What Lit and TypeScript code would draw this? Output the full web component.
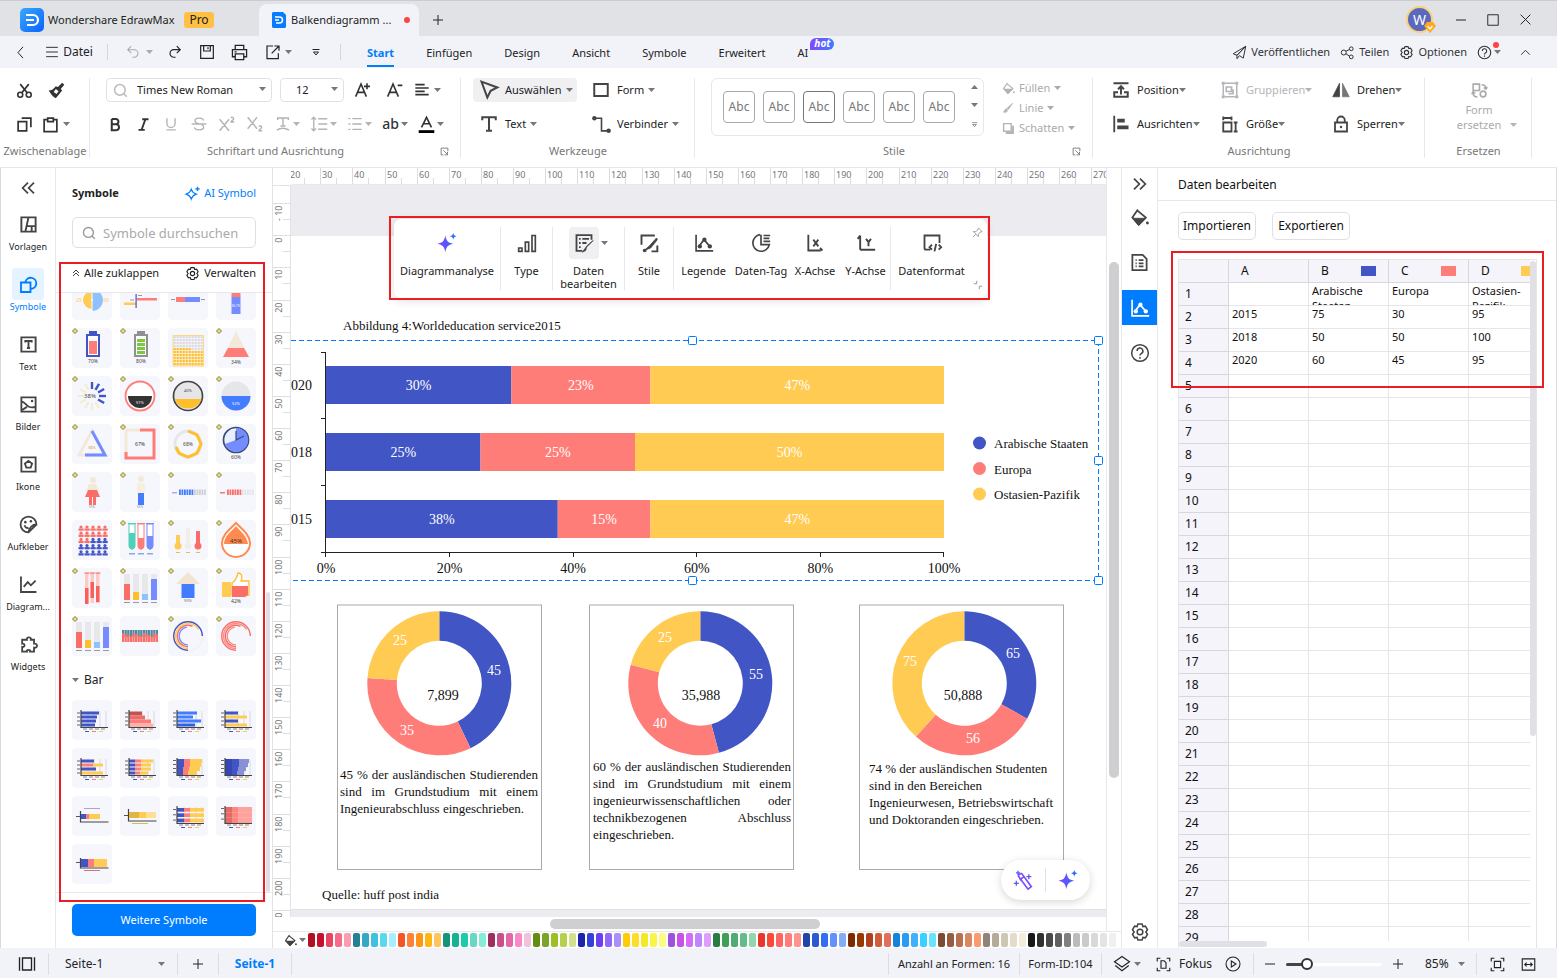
import { LitElement, html, svg, css } from "lit";
import { customElement } from "lit/decorators.js";

const BLUE = "#4155c5";
const CORAL = "#ff7d78";
const GOLD = "#ffcb52";

/* ---------- small drawing helpers ---------- */
const R = (x: number, y: number, w: number, h: number, f: string) =>
  svg`<rect x=${x} y=${y} width=${w} height=${h} fill=${f} />`;
const P = (d: string, stroke = "none", w = 1, fill = "none") =>
  svg`<path d=${d} stroke=${stroke} stroke-width=${w} fill=${fill} />`;
const C = (x: number, y: number, r: number, fill = "none", stroke = "none", w = 1) =>
  svg`<circle cx=${x} cy=${y} r=${r} fill=${fill} stroke=${stroke} stroke-width=${w} />`;
const T = (x: number, y: number, t: string, f = "#444", s = 5) =>
  svg`<text x=${x} y=${y} fill=${f} font-size=${s} text-anchor="middle">${t}</text>`;

const arc = (cx: number, cy: number, ro: number, ri: number, a0: number, a1: number) => {
  const p = (r: number, a: number) =>
    `${(cx + r * Math.sin(a * 2 * Math.PI)).toFixed(2)} ${(cy - r * Math.cos(a * 2 * Math.PI)).toFixed(2)}`;
  const big = a1 - a0 > 0.5 ? 1 : 0;
  return `M${p(ro, a0)}A${ro} ${ro} 0 ${big} 1 ${p(ro, a1)}L${p(ri, a1)}A${ri} ${ri} 0 ${big} 0 ${p(ri, a0)}Z`;
};

/* ---------- icon set, 24 unit grid ---------- */
const k = "currentColor";
const ICONS: Record<string, unknown> = {
  back: P("M16 3 8 12l8 9", k, 1.6),
  menu: P("M2 4h20M2 12h20M2 20h20", k, 1.6),
  undo: P("M9 2 3 8l6 6M3 8h11a6.500 6.500 0 0 1 0 13h-3", k, 1.8),
  redo: P("m15 2 6 6-6 6M21 8H10a6.500 6.500 0 0 0 0 13h3", k, 2),
  save: P("M2.500 2.500h19v19h-19zM7 2.500v8h10v-8M13.500 5v3", k, 1.8),
  print: P("M6 8V2h12v6M6 18H2V8h20v10h-4M6 14h12v8H6zM5 11h3", k, 1.8),
  share: P("M12 3H3v19h17v-8M14 3h7v7M21 3 10 14", k, 1.8),
  more: P("M5 7h14M7 12h10l-5 6z", k, 2),
  plus: P("M12 2v20M2 12h20", k, 2),
  minus: P("M2 12h20", k, 2),
  square: P("M3 3h18v18H3z", k, 1.6),
  cross: P("m3 3 18 18M21 3 3 21", k, 1.8),
  chevUp: P("m4 16 8-8 8 8", k, 1.8),
  send: P("M22 2 2 14l6 2.500L22 2l-4 19-6-4M22 2 8 16.500V22l4-5", k, 1.6),
  nodes: svg`${C(6, 12, 4, "none", k, 1.6)}${C(18, 6, 3, "none", k, 1.6)}${C(18, 19, 3, "none", k, 1.6)}${P("m9.500 10 6-3M9.500 14l6 4", k, 1.6)}`,
  gear: svg`${P("M9.500 2.500h5l1 3 3-.5 2.500 4.300L19 12l2 2.700-2.500 4.300-3-.5-1 3h-5l-1-3-3 .5L3 14.700 5 12 3 9.300 5.500 5l3 .5z", k, 1.8)}${C(12, 12, 3.400, "none", k, 1.8)}`,
  help: svg`${C(12, 12, 10, "none", k, 1.8)}${P("M8.500 9.500a3.500 3.500 0 1 1 5 3.200c-1.200.6-1.500 1.200-1.500 2.300M12 16.800v2", k, 1.8)}`,
  cut: svg`${C(6, 18, 3.500, "none", k, 2.200)}${C(18, 18, 3.500, "none", k, 2.200)}${P("M8 15.500 18 3M16 15.500 6 3", k, 2.400)}`,
  brush: svg`${P("m20 1 3 3-5 6 2 2-9 11C7 21 4 17 1 12c4 0 7-2 10-6l3 1z", "none", 0, k)}${P("m8 14 4 3 3-4-4-3z", "none", 0, "#fff")}`,
  copy: P("M3 8h12v13H3zM8 3h13v13", k, 2.400),
  paste: P("M8 5H3v17h18V5h-5M8 3h8v5H8z", k, 2.400),
  glass: svg`${C(11, 11, 8.500, "none", k, 2.400)}${P("m17 17 5 5", k, 2.400)}`,
  aplus: P("M1 22 9 3l8 19M4.500 15.500h9M18 2v9M13.500 6.500h9", k, 2.400),
  aminus: P("M1 22 9 3l8 19M4.500 15.500h9M16 5h7", k, 2.400),
  align: P("M2 4h14M2 9h20M2 14h14M2 19h20", k, 2.600),
  bold: P("M6 3v18h7.500a4.800 4.800 0 0 0 0-9.500H6M6 3h6.500a4.200 4.200 0 0 1 0 8.500", k, 3.200),
  italic: P("M10 3.500h10M4 20.500h10M15 3.500 9 20.500", k, 3),
  under: P("M5 2v9a7 7 0 0 0 14 0V2M4 22h16", k, 2.400),
  strike: P("M19 7c-1-5-13-5-13 0 0 3 3 4 6 5M5 17c1 5 14 5 14 0 0-2-1-3-3-4M1 12h22", k, 2),
  sup: P("m1 5 14 17M15 5 1 22M18 3c1-2 4-1 4 1 0 2-4 3-4 5h5", k, 2.200),
  sub: P("m1 2 14 17M15 2 1 19M18 16c1-2 4-1 4 1 0 2-4 3-4 5h5", k, 2.200),
  tcase: P("M4 6V3h16v3M12 3v12M8 15h8M3 21c5-3 12-3 18 0", k, 2.200),
  spacing: P("M5 3v18M2 6l3-3 3 3M2 18l3 3 3-3M11 5h12M11 12h12M11 19h12", k, 1.800),
  list: P("M2 4h3M2 12h3M2 20h3M8 4h14M8 12h14M8 20h14", k, 2),
  fontcol: svg`${P("M5 16 12 2l7 14M8 11h8", k, 2.300)}${R(1, 20, 22, 4, "#000")}`,
  launch: P("M9 21H3V3h18v8M9 9l11 11M20 13v8h-8", k, 2.400),
  pointer: P("M3 2 22 9l-8 4-4 8z", k, 2.400),
  rect: P("M3 4h18v16H3z", k, 2.600),
  text: P("M3 7V3h18v4M12 3v18M8 21h8", k, 2.700),
  conn: svg`${P("M5 4h7v16h7", k, 2)}${C(3, 4, 2.800, k)}${C(21, 20, 2.800, k)}`,
  bucket: svg`${P("M10 2 3 12l8 9 9-9L9 3", k, 2.200)}${P("M3 13h17l-9 9z", k, 1, k)}${C(22, 19, 1.800, k)}`,
  pen: P("M22 2 10 12l3 3zM9 13c-4 0-2 5-7 7 5 2 10 0 9-5z", k, 1, k),
  shadow: svg`${P("M7 22h15V7h-4v11H7z", k, 0, k)}${P("M3 3h14v14H3z", k, 2.600)}`,
  position: P("M2 3h20M12 18V7M8 11l4-4 4 4M8 15H3v6h18v-6h-5", k, 2.600),
  ausrichten: svg`${P("M3 1v22", k, 2.400)}${R(7, 5, 10, 5, k)}${R(7, 14, 15, 5, k)}`,
  group: svg`${P("M5 3h14M5 21h14M3 5v14M21 5v14", k, 2)}${R(1, 1, 4, 4, k)}${R(19, 1, 4, 4, k)}${R(1, 19, 4, 4, k)}${R(19, 19, 4, 4, k)}${P("M7 8h7v6H7zM16 11v6h-6", k, 2.200)}`,
  size: P("M3 10h11v12H3zM3 2v5M3 4h11M14 2v5M17 10h5M17 22h5M19.500 10v12", k, 2.400),
  flip: svg`${P("M10 3v18H1z", k, 1, k)}${P("M14 3v18h9z", "#777", 1, "#777")}`,
  lock: svg`${P("M4 10h16v12H4zM7 10V7a5 5 0 0 1 10 0v3", k, 2.400)}${C(12, 16, 1.600, k)}`,
  replace: svg`${P("M3 3h9v9H3zM15 4c4 0 6 2 6 6M18 8l3 2 2-3M3 15c0 4 2 6 6 6M1 17l2-3 3 2", k, 2.200)}${C(17, 17, 4, "none", k, 2.400)}`,
  dblLeft: P("m12 4-8 8 8 8M21 4l-8 8 8 8", k, 2.600),
  dblRight: P("m3 4 8 8-8 8M12 4l8 8-8 8", k, 2.600),
  vorlagen: P("M3 3h18v18H3zM8 21 12 3M10 14h11M16 14v7", k, 2.400),
  shapes: svg`${P("M2.500 9.500h12v12h-12z", k, 2.300)}${P("M8 9a7 7 0 1 1 7 8.500", k, 2.300)}`,
  tbox: P("M3 3h18v18H3zM8 9.500V7.500h8v2M12 8v8M10 16.500h4", k, 2.400),
  image: svg`${P("M3 3h18v18H3zM3 8c8 2 6 10 18 7M4 19l6-4", k, 2.300)}${C(16.500, 7.500, 1.600, k)}`,
  ikone: P("M3 3h18v18H3zM12 7.500l4.500 3.300-1.700 5.200H9.200L7.500 10.800z", k, 2.300),
  sticker: svg`${P("M12 22A10 10 0 1 1 22 12c-5 0-9 4-10 10zM12 22 22 12M7 13c1 3 3 4 5 3", k, 2.300)}${C(8, 9, 1.600, k)}${C(15, 8, 1.600, k)}`,
  chart: P("M2.500 2v19.500H22M6 15l5-6 4 4 6-6", k, 2.300),
  widget: P("M7 6h3c-1-4 6-4 5 0h4v5c5-1 5 6 0 5v5h-5c1-3-5-3-4 0H4v-6c4 1 4-5 0-4V6z", k, 2.300),
  aistar: svg`${P("M10 5c1.500 5 3 6.500 8 8-5 1.500-6.500 3-8 8-1.500-5-3-6.500-8-8 5-1.500 6.500-3 8-8z", k, 1.800)}${P("M20 1v7M16.500 4.500h7", k, 2.200)}`,
  upup: P("m3 12 9-9 9 9M3 21l9-9 9 9", k, 2.600),
  aifill: svg`<defs><linearGradient id="g" x1="0" x2="1"><stop offset="0" stop-color="#8a3ffc"/><stop offset="1" stop-color="#2f6bff"/></linearGradient></defs>${P("M10 3c1.500 7 3 8.500 9.500 10C13 14.500 11.500 16 10 23 8.500 16 7 14.500.5 13 7 11.500 8.500 10 10 3z", "none", 0, "url(#g)")}${P("M19.500 0c.7 2.600 1.200 3.300 4 4-2.800.7-3.300 1.400-4 4-.7-2.600-1.200-3.300-4-4 2.800-.7 3.300-1.400 4-4z", "none", 0, "#2f6bff")}`,
  bars: P("M2 18h4v4H2zM10 11h4v11h-4zM18 3h4v19h-4z", k, 2),
  edit: svg`${P("M21 8V2.500H3v19h7M6 7h2M10 7h8M6 12h2M10 12h5M6 17h2", k, 2.200)}${P("m23 9-8 8-1 4-4 2 3-4 3-4z", k, 1, k)}`,
  style: svg`${P("M9 21H6M3 14V3h16M22 15v7h-7", k, 2.300)}${P("m21 6-9 10-6 5 8-3 8-10z", k, 1, k)}${C(6.500, 21, 2, k)}`,
  legend: svg`${P("M2.500 2v19.500H23M6 16l6-8 7 8", k, 2)}${C(7, 16, 2.600, k)}${C(12.500, 8, 2.600, k)}${C(19, 16, 2.600, k)}`,
  tag: P("M11 2a10 10 0 1 0 11 12H12V2M15 3h8M15 6.500h7M15 10h8", k, 2),
  xaxis: P("M4 2v19h15M18 18l3 3M10 8l6 8M16 8l-6 8", k, 2.200),
  yaxis: P("M5 20V3M2 7l3-4M5 20h18M12 7l3 4 3-4M15 11v5", k, 2.300),
  code: P("M10 20H5a2 2 0 0 1-2-2V3h18v9M12 14l-3 3 3 3M20 14l3 3-3 3M17 13l-2 9", k, 2.200),
  pin: P("m14 2 8 8-4 1-4 5v5L3 10h5l5-4zM8 16l-6 6", k, 2),
  shrink: P("M2 9h7V2M15 22v-7h7", k, 2.400),
  wand: svg`${P("M7 8 18 23l4-3L11 5c-1-2-6 1-4 3zM8 12l5-4", "#7a4dfb", 2)}${P("M4 13v6M1 16h6M6 1v5M3.500 3.500h5M19 5v6M16 8h6", "#5b5bff", 1.600)}`,
  doc: P("M3 2.500h13l5 5v14H3zM7 9h1.500M11 9h6M7 13h1.500M11 13h6M7 17h1.500M11 17h6", k, 2.200),
  pages: P("M2 3v18M22 3v18M6 4h12v16H6z", k, 1.800),
  layers: P("m12 2 10 7-10 7L2 9zM3 14l9 7 9-7", k, 1.600),
  focus: P("M2 7V2h5M17 2h5v5M22 17v5h-5M7 22H2v-5M8 6h5l3 3v9H8z", k, 1.800),
  play: svg`${C(12, 12, 10.500, "none", k, 1.600)}${P("M9.500 7.500v9l7-4.500z", k, 1.600)}`,
  fit: P("M2 7V2h5M17 2h5v5M22 17v5h-5M7 22H2v-5M7 7h10v10H7z", k, 1.800),
  width: P("M2 3h20v18H2zM6 12h12M9 9l-3 3 3 3M15 9l3 3-3 3", k, 1.800),
};
const ic = (name: string, size = 18) =>
  html`<svg class="ic" width=${size} height=${size} viewBox="0 0 24 24" aria-hidden="true">${ICONS[name]}</svg>`;
const caret = html`<svg class="caret" width="7" height="4" viewBox="0 0 7 4" aria-hidden="true"><path d="M0 0h7L3.500 4z" fill="currentColor" /></svg>`;

const base = css`
  * { box-sizing: border-box; }
  :host { box-sizing: border-box; font: 11px/16px "Noto Sans", "Open Sans", sans-serif; color: #222; white-space: nowrap; }
  button, select, input { font: inherit; color: inherit; margin: 0; padding: 0; border: 0; background: none; outline: 0; }
  button { display: flex; align-items: center; justify-content: center; flex: none; }
  select { appearance: none; }
  svg { display: block; flex: none; overflow: visible; }
  .caret { color: #777; }
  a { color: inherit; text-decoration: none; }
`;

/* ---------- title bar and menu ---------- */
@customElement("app-header")
class AppHeader extends LitElement {
  static styles = [base, css`
    :host { display: block; background: #f2f3f9; }
    .title { display: flex; align-items: center; height: 36px; background: #e1e2e6; border-top: 1px solid #cbccd2; padding: 2px 16px 0 20px; }
    .name { margin: 0 9px 0 4px; width: 127px; }
    .pro { background: #ffc046; border-radius: 3px; height: 16px; width: 30px; text-align: center; font-size: 12px; }
    .tab { display: flex; align-items: center; align-self: flex-end; height: 32px; width: 160px; margin: 0 13px 0 45px; padding-left: 13px; gap: 5px; background: #f2f3f9; border-radius: 8px 8px 0 0; }
    .tab span { width: 108px; }
    .dot { width: 6px; height: 6px; border-radius: 50%; background: #ff4340; }
    .sp { flex: 1; }
    .win { width: 32px; height: 24px; }
    .avatar { position: relative; width: 27px; height: 27px; border-radius: 50%; background: #5b69bd; border: 2px solid #fbd07c; color: #fff; font-size: 14px; line-height: 23px; text-align: center; margin-right: 12px; }
    .avatar svg { position: absolute; right: -5px; bottom: -2px; }
    .menu { display: flex; align-items: center; height: 32px; padding: 0 22px 0 10px; }
    .b { height: 24px; gap: 4px; }
    .w20 { width: 20px; } .w32 { width: 32px; } .w34 { width: 34px; }
    .file { width: 62px; margin-left: 8px; font-size: 12px; }
    .undo { width: 33px; justify-content: flex-start; gap: 6px; }
    .exp { width: 34px; justify-content: flex-start; margin-left: 10px; }
    .sep { width: 1px; height: 16px; background: #d6d7dd; flex: none; }
    .s1 { margin: 0 18px 0 7px; } .s2 { margin-left: 7px; }
    .off, .off .caret { color: #aaa; }
    nav { display: flex; gap: 32px; margin-left: 26px; align-self: stretch; }
    nav a { line-height: 33px; }
    nav .on { color: #007dff; font-weight: 700; border-bottom: 2px solid #007dff; height: 31px; }
    .hot { position: absolute; margin: 2px 0 0 2px; display: inline-block; width: 24px; height: 12px; border-radius: 6px 6px 6px 0; background: linear-gradient(90deg, #8547ff, #3c7dff); color: #fff; font: italic 700 10px/11px "Noto Sans", sans-serif; text-align: center; }
    .right { display: flex; gap: 10px; color: #333; }
    .help { position: relative; width: 26px; justify-content: flex-start; gap: 2px; }
    .help .dot { position: absolute; top: 2px; left: 16px; }
    .up { width: 20px; margin-left: 2px; }
  `];
  render() {
    return html`
      <header class="title">
        <svg width="24" height="24" viewBox="0 0 24 24"><defs><linearGradient id="lg" x2="1" y2="1"><stop stop-color="#39a9ff"/><stop offset="1" stop-color="#0a62ff"/></linearGradient></defs>
          <rect width="24" height="24" rx="5" fill="url(#lg)"/><path d="M6 7h7a5 5 0 0 1 0 10H7M6 12h8" stroke="#fff" stroke-width="2.200" fill="none"/></svg>
        <span class="name">Wondershare EdrawMax</span><span class="pro">Pro</span>
        <div class="tab"><svg width="14" height="16" viewBox="0 0 14 16"><path d="M1 0h10l3 3v12l-1 1H1l-1-1V1z" fill="#087cff"/><path d="M3 5h4.500a3 3 0 0 1 0 6H4M3 8h4" stroke="#fff" stroke-width="1.500" fill="none"/></svg>
          <span>Balkendiagramm ...</span><i class="dot"></i></div>
        <button aria-label="Neuer Tab">${ic("plus", 12)}</button><span class="sp"></span>
        <div class="avatar">W<svg width="12" height="11" viewBox="0 0 12 11"><path d="M3 0h6l3 4-6 7-6-7z" fill="#ffa820"/><path d="m3.500 4 2.500 3 2.500-3" stroke="#fff" fill="none" stroke-width="1.200"/></svg></div>
        <button class="win" aria-label="Minimieren">${ic("minus", 12)}</button>
        <button class="win" aria-label="Maximieren">${ic("square", 14)}</button>
        <button class="win" aria-label="Schließen">${ic("cross", 13)}</button>
      </header>
      <div class="menu">
        <button class="b w20" aria-label="Zurück">${ic("back", 15)}</button>
        <button class="b file">${ic("menu", 14)} Datei</button>
        <i class="sep s1"></i>
        <button class="b off undo" aria-label="Rückgängig">${ic("undo", 14)}${caret}</button>
        <button class="b w32" aria-label="Wiederholen">${ic("redo", 14)}</button>
        <button class="b w32" aria-label="Speichern">${ic("save", 16)}</button>
        <button class="b w32" aria-label="Drucken">${ic("print", 17)}</button>
        <button class="b exp" aria-label="Exportieren">${ic("share", 16)}${caret}</button>
        <button class="b w34" aria-label="Mehr">${ic("more", 12)}</button>
        <i class="sep s2"></i>
        <nav><a class="on" href="#start">Start</a><a href="#e">Einfügen</a><a href="#d">Design</a><a href="#a">Ansicht</a><a href="#s">Symbole</a><a href="#w">Erweitert</a><a href="#ai">AI<span class="hot">hot</span></a></nav>
        <span class="sp"></span>
        <div class="right">
          <button class="b">${ic("send", 15)}Veröffentlichen</button>
          <button class="b">${ic("nodes", 15)}Teilen</button>
          <button class="b">${ic("gear", 15)}Optionen</button>
          <button class="b help" aria-label="Hilfe">${ic("help", 15)}${caret}<i class="dot"></i></button>
          <button class="b up" aria-label="Einklappen">${ic("chevUp", 13)}</button>
        </div>
      </div>`;
  }
}

/* ---------- ribbon ---------- */
@customElement("app-ribbon")
class AppRibbon extends LitElement {
  static styles = [base, css`
    :host { display: flex; height: 100px; background: #fff; border-bottom: 1px solid #e6e6ea; color: #333; }
    .g { position: relative; display: grid; grid-template-rows: 24px 24px 16px; row-gap: 10px; padding-top: 10px; flex: none; }
    .g::after { content: ""; position: absolute; right: 0; top: 10px; height: 80px; width: 1px; background: #e8e8ec; }
    .row { display: flex; align-items: center; }
    .lab { text-align: center; color: #777; position: relative; margin-top: -3px; }
    .lab button { position: absolute; right: 12px; top: 4px; }
    .clip { width: 90px; } .font { width: 371px; } .tools { width: 234px; } .styles { width: 398px; } .arr { width: 332px; } .rep { width: 107px; }
    .clip .row { padding-left: 8px; }
    .w32 { width: 32px; height: 24px; gap: 4px; }
    .font .row { padding-left: 16px; }
    .combo { display: flex; align-items: center; height: 24px; border: 1px solid #e2e2e6; border-radius: 4px; margin-right: 8px; padding: 0 5px 0 6px; color: #bbb; }
    .combo select { flex: 1; color: #222; padding-left: 9px; min-width: 0; }
    .fam { width: 166px; } .sz { width: 64px; margin-right: 3px; }
    .combo .caret { margin-bottom: 2px; }
    .b28 { width: 28px; height: 24px; } .b36 { width: 36px; height: 24px; gap: 2px; }
    .font .second { padding-left: 11px; }
    .off, .off .caret { color: #b4b4b8; }
    .ab { font-weight: 500; font-size: 14px; }
    .i { display: flex; width: 32px; justify-content: center; }
    .t { justify-content: flex-start; height: 24px; padding-right: 4px; color: #222; }
    .t .caret { margin-left: 4px; }
    .t .i { color: #444; }
    .tools .row { display: grid; grid-template-columns: 112px 1fr; padding-left: 12px; justify-items: start; }
    .sel { background: #f0f0f2; border-radius: 4px; padding-right: 4px; }
    .box { grid-row: 1 / 3; display: flex; margin-left: 16px; }
    .gal { display: flex; gap: 8px; width: 273px; height: 58px; border: 1px solid #e8e8ec; border-radius: 6px; padding: 12px 0 0 11px; margin-right: 14px; font-size: 12px; }
    .sw { width: 32px; height: 32px; border: 1px solid #aaa; border-radius: 4px; background: #fff; color: #777; }
    .sw.d { border-color: #777; }
    .arrows { display: flex; flex-direction: column; justify-content: space-between; align-items: center; height: 44px; margin: -6px 0 0 7px; color: #777; }
    .up { transform: rotate(180deg); display: block; }
    .col { display: flex; flex-direction: column; }
    .col .t { height: 20px; color: #aaa; }
    .col .i { width: 20px; color: #b4b4b8; margin-right: 1px; }
    .col .caret { color: #aaa; }
    .arr .row { display: grid; grid-template-columns: 109px 111px 1fr; padding-left: 16px; justify-items: start; }
    .arr .i { width: 24px; margin-right: 4px; }
    .arr .t .caret { margin-left: 0; }
    .arr .t.off, .arr .off .i { color: #b4b4b8; }
    .big { grid-row: 1 / 3; display: grid; grid-template-columns: 46px 18px; align-items: end; justify-content: start; justify-items: center; align-content: start; padding: 4px 0 0 31px; color: #aaa; line-height: 15px; white-space: normal; }
    .big .ic { grid-column: 1; margin-bottom: 3px; }
    .big span { grid-column: 1; text-align: center; } .big .caret { align-self: end; margin: 0 0 5px 4px; color: #b4b4b8; }
  `];
  render() {
    const tb = (icon: string, label: string, cls = "", s = 18) =>
      html`<button class="t ${cls}"><span class="i">${ic(icon, s)}</span>${label}${caret}</button>`;
    const b = (icon: string, label: string, cls = "", c = false, s = 16) =>
      html`<button class=${cls} aria-label=${label}>${ic(icon, s)}${c ? caret : ""}</button>`;
    return html`
      <section class="g clip">
        <div class="row">${b("cut", "Ausschneiden", "w32", false, 17)}${b("brush", "Format", "w32", false, 17)}</div>
        <div class="row">${b("copy", "Kopieren", "w32", false, 17)}${b("paste", "Einfügen", "w32", true, 17)}</div>
        <div class="lab">Zwischenablage</div>
      </section>
      <section class="g font">
        <div class="row">
          <div class="combo fam">${ic("glass", 15)}<select aria-label="Schriftart"><option>Times New Roman</option></select>${caret}</div>
          <div class="combo sz"><select aria-label="Größe"><option>12</option></select>${caret}</div>
          ${b("aplus", "Größer", "w32")}${b("aminus", "Kleiner", "w32")}${b("align", "Ausrichten", "w32", true)}
        </div>
        <div class="row second">
          ${b("bold", "Fett", "b28", false, 15)}${b("italic", "Kursiv", "b28", false, 15)}
          ${b("under", "Unterstrichen", "b28 off", false, 14)}${b("strike", "Durchgestrichen", "b28 off")}
          ${b("sup", "Hochgestellt", "b28 off")}${b("sub", "Tiefgestellt", "b28 off")}
          ${b("tcase", "Textart", "b36 off", true)}${b("spacing", "Zeilenabstand", "b36 off", true, 18)}${b("list", "Liste", "b36 off", true)}
          <button class="b36 ab">ab${caret}</button>${b("fontcol", "Schriftfarbe", "b36", true, 17)}
        </div>
        <div class="lab">Schriftart und Ausrichtung<button aria-label="Mehr">${ic("launch", 9)}</button></div>
      </section>
      <section class="g tools">
        <div class="row">${tb("pointer", "Auswählen", "sel", 20)}${tb("rect", "Form")}</div>
        <div class="row">${tb("text", "Text")}${tb("conn", "Verbinder", "", 19)}</div>
        <div class="lab">Werkzeuge</div>
      </section>
      <section class="g styles">
        <div class="box">
          <div class="gal">${[0, 0, 1, 0, 0, 0].map((d) => html`<button class="sw ${d ? "d" : ""}">Abc</button>`)}
            <div class="arrows"><span class="up">${caret}</span>${caret}${ic("more", 9)}</div></div>
          <div class="col">${tb("bucket", "Füllen", "", 13)}${tb("pen", "Linie", "", 12)}${tb("shadow", "Schatten", "", 13)}</div>
        </div>
        <div class="lab">Stile<button aria-label="Mehr">${ic("launch", 9)}</button></div>
      </section>
      <section class="g arr">
        <div class="row">${tb("position", "Position")}${tb("group", "Gruppieren", "off")}${tb("flip", "Drehen")}</div>
        <div class="row">${tb("ausrichten", "Ausrichten")}${tb("size", "Größe")}${tb("lock", "Sperren")}</div>
        <div class="lab">Ausrichtung</div>
      </section>
      <section class="g rep">
        <button class="big">${ic("replace", 17)}<span>Form ersetzen</span>${caret}</button>
        <div class="lab">Ersetzen</div>
      </section>`;
  }
}

/* ---------- symbol thumbnails, 40 unit grid ---------- */
const battery = (edge: string, body: unknown, t: string) =>
  svg`${R(17, 3, 8, 4, edge)}${P("M15 7h12v21H15z", edge, 2, "#fff")}${body}${T(21, 35, t)}`;
const tubes = (colors: string[], lv: number[], x0: number, gap: number, w: number, y0: number, h: number) =>
  colors.map((c, i) => svg`${R(x0 + i * gap, y0, w, h, "#e8e8ea")}${R(x0 + i * gap, y0 + h - lv[i], w, lv[i], c)}${R(x0 + i * gap, y0 + h + 2, w, 1, "#999")}`);
const people = (on: string, off: string, head: string) =>
  svg`${R(4, 20, 5, 1.500, head)}${Array.from({ length: 11 }, (_, i) => R(11 + i * 2.500, 17.500, 1.800, 5.500, i < 6 ? on : off))}`;
const ray = (n: number, on: string, off: string) =>
  Array.from({ length: 12 }, (_, i) => {
    const a = (i * Math.PI) / 6, s = Math.sin(a), c = -Math.cos(a);
    return P(`M${20 + 7 * s} ${20 + 7 * c}L${20 + 14 * s} ${20 + 14 * c}`, i < n ? on : off, 2.400);
  });
const hbars = (rows: Array<Array<[number, string]>>, x = 9, y0 = 11.500, bh = 3, pitch = 4, skew = 0) =>
  svg`${[16, 22, 28, 34].map((g) => P(`M${g} 11v16`, "#ccc", 0.700))}
    ${rows.map((r, j) => {
      let cx = x;
      return svg`${R(x - 4, y0 + j * pitch + 1, 3, 1, "#666")}${r.map(([w, c], i) => { const ww = i === r.length - 1 ? w - j * skew : w; const q = R(cx, y0 + j * pitch, ww, bh, c); cx += ww; return q; })}`;
    })}${P(`M${x} 10v17.500h27`, "#444", 1.200)}${P("M11 29h4m2 0h4m2 0h4m2 0h4", "#888", 1)}${R(13, 31, 4, 1, BLUE)}${R(20, 31, 4, 1, CORAL)}${R(27, 31, 4, 1, GOLD)}`;
const rings = (cs: string[]) => cs.map((c, i) => P(arc(20, 20, 15 - i * 1.800, 13.600 - i * 1.800, 0.500, 1.250 - i * 0.090), "none", 0, c));

const THUMBS: Array<{ d: boolean; s: unknown }> = [
  { d: false, s: svg`${P(arc(20, 20, 11, 1, 0, 0.5), "none", 0, "#8fc1ff")}${P(arc(20, 20, 9, 1, 0.5, 1), "none", 0, GOLD)}${P("M20 0v32", "#fff", 1)}${T(7, 22, "25", GOLD)}${T(34, 22, "50", GOLD)}` },
  { d: false, s: svg`${R(17, 18, 20, 2.500, CORAL)}${R(4, 22.500, 12, 2.500, GOLD)}${R(15.500, 14, 1.200, 14, BLUE)}${R(18, 15, 4, 1, "#999")}${R(10, 19.500, 4, 1, "#999")}` },
  { d: false, s: svg`${R(8, 17, 9, 5, CORAL)}${R(17, 17, 15, 5, "#748cff")}${R(3, 19, 4, 1, "#999")}${R(33, 19, 4, 1, "#999")}` },
  { d: false, s: svg`${R(15.500, 4, 9, 13, CORAL)}${R(15.500, 17, 9, 17, "#748cff")}${T(20, 27, "66.7%", "#fff", 3)}` },
  { d: true, s: battery(BLUE, R(17, 13, 8, 13, CORAL), "70%") },
  { d: true, s: battery("#909090", [11, 15, 19, 23].map((y) => R(17, y, 8, 3, "#7ac943")), "80%") },
  { d: false, s: svg`${Array.from({ length: 10 }, (_, j) => Array.from({ length: 10 }, (_, i) => R(5.500 + i * 3, 8 + j * 3, 2.300, 2.300, j > 4 || (j === 4 && i < 6) ? "#ffbf2b" : "#dddde0")))}${P("M5 7.500h30.500v30.500H5z", "#ffcf60", 0.800)}` },
  { d: true, s: svg`${P("M20 3 33 29H7z", "none", 0, "#f3e9d8")}${P("M12 20h16l5 9H7z", "none", 0, CORAL)}${T(20, 36, "34%")}` },
  { d: true, s: svg`${ray(5, BLUE, "#f3ecd8")}${T(18, 22, "38%", "#444", 6)}` },
  { d: true, s: svg`${C(20, 20, 14.500, "#fff", CORAL, 1.800)}${P("M8 20h24a12 12 0 0 1-24 0z", "none", 0, "#333")}${T(20, 28, "51%", "#fff", 4)}` },
  { d: true, s: svg`${C(20, 20, 14.500, "#e6e6e8", "#444", 1.700)}${P("M6.500 23h27a14 13 0 0 1-27 0z", "none", 0, "#ffbf2b")}${T(20, 16, "40%", "#444", 4)}` },
  { d: true, s: svg`${C(20, 20, 14.500, "#e6e6e8")}${P("M5.500 20h29a14.500 14.500 0 0 1-29 0z", "none", 0, "#437cff")}${T(20, 29, "52%", "#fff", 4)}` },
  { d: true, s: svg`${P("M20 7 7 31h26z", "#f3e9d8", 3)}${P("M20 7 33 31H13", "#748cff", 3)}${T(20, 25, "38%", "#e9a13b", 4)}` },
  { d: true, s: svg`${P("M20 6H6v28", "#f3e9d8", 3)}${P("M20 6h14v28H6v-6", CORAL, 3)}${T(20, 22, "67%", "#333")}` },
  { d: true, s: svg`${C(20, 20, 13, "none", "#e6e6e8", 3)}${P("M20 7l9 4 4 9-4 9-9 4-9-4-3-6", "#ffbf2b", 3)}${T(20, 22, "68%")}` },
  { d: true, s: svg`${C(20, 16, 12.500, "#e8edff", "#3c4c70", 1.700)}${P("M20 16V4a12 12 0 1 1-11 16z", "none", 0, "#748cff")}${P("M20 7v9l8-4", "#3c4c70", 1.200)}${T(20, 35, "60%")}` },
  { d: true, s: svg`${C(21, 8, 3, "#f3e9d8")}${P("M17 12h7l3 7H14z", "none", 0, "#f3e9d8")}${P("M16 18h9l3 7h-4v8h-3v-8h-1v8h-3v-8h-4z", "none", 0, "#fb6e68")}${T(20, 36, "55%", "#888", 3)}` },
  { d: true, s: svg`${C(21, 7, 3, "#f3e9d8")}${R(17, 11, 8, 10, "#f6efe0")}${R(18, 21, 6, 12, "#437cff")}${T(20, 36, "55%", "#888", 3)}` },
  { d: true, s: people("#437cff", "#cfcfd4", "#b9a9d9") },
  { d: true, s: people("#fb6e68", "#e6e6ea", "#e08080") },
  { d: false, s: Array.from({ length: 5 }, (_, j) => Array.from({ length: 5 }, (_, i) => { const c = j * 5 + i < 12 ? "#fb6e68" : BLUE; return svg`${C(9 + i * 6, 7 + j * 6.200, 1.600, c)}${R(6.500 + i * 6, 8.500 + j * 6.200, 5.200, 2.200, c)}`; })) },
  { d: true, s: ["#4ed0bd", CORAL, "#748cff"].map((c, i) => svg`${P(`M${9 + i * 9} 4v22a3 3 0 0 0 6 0V4zM${8 + i * 9} 3.500h8`, c, 1, "#fff")}${P(`M${9 + i * 9} ${[13, 18, 16][i]}v${[14, 9, 11][i]}l3 3 3-3v-${[14, 9, 11][i]}z`, "none", 0, c)}${R(9 + i * 9, 33, 6, 1.500, "#8fa8e8")}`) },
  { d: true, s: [GOLD, "#f3efe8", "#fb6e68"].map((c, i) => svg`${R(8 + i * 10, [15, 8, 11][i], 4, [12, 19, 16][i], c)}${C(10 + i * 10, 26, 3.500, i === 1 ? "#eee" : c)}${R(8 + i * 10, 32, 4, 1, "#f0b070")}`) },
  { d: true, s: svg`${P("M20 3c6 6 14 12 14 20a14 14 0 0 1-28 0c0-8 8-14 14-20z", "#ff8a50", 2, "#fff")}${P("M20 6c5 6 11 10 12 18H8c0-8 7-12 12-18z", "none", 0, "#ff8a50")}${T(20, 23, "45%", "#333", 6)}` },
  { d: true, s: [0, 1, 2].map((i) => svg`${R(13 + i * 5.500, 5, 3.500, 30, "#ffc9c4")}${R(13 + i * 5.500, [20, 14, 18][i], 3.500, 16, "#fb5f5a")}${P(`M${12.500 + i * 5.500} 5h5`, "#fb5f5a", 1)}`) },
  { d: true, s: tubes(["#fb6e68", "#ffbf2b", "#8fc1ff", "#748cff"], [16, 8, 6, 21], 4, 9, 6, 6, 26) },
  { d: true, s: svg`${P("M20 4 32 16H8z", "none", 0, "#f3e4cf")}${R(13.500, 16, 13, 14, "#437cff")}${T(20, 34, "55%", "#666", 4)}` },
  { d: true, s: svg`${R(6, 14, 9, 15, GOLD)}${P("M16 15c4-2 5-6 6-10 5 0 4 6 3 8h8v14H16z", "#ffbf2b", 1.300, "#fff")}${P("M16 18h16v9l-3 2H16z", "none", 0, "#fb6e68")}${T(20, 35, "42%", "#444", 5)}` },
  { d: true, s: tubes(["#fb6e68", "#ffbf2b", "#8fc1ff", "#748cff"], [16, 8, 6, 21], 4, 9, 6, 6, 26) },
  { d: false, s: Array.from({ length: 14 }, (_, i) => svg`${R(2 + i * 2.600, 14, 2.200, 7, "#4f8aa0")}${R(2 + i * 2.600, 17 + (i % 4), 2.200, 9 - (i % 4), "#fb6e68")}`) },
  { d: true, s: svg`${C(20, 20, 15, "none", "#ededf2", 1)}${rings([BLUE, GOLD, "#fb6e68", "#748cff"])}` },
  { d: true, s: rings(["#fb6e68", "#fb8a84", "#fb6e68", "#fb8a84"]) },
];
const b = BLUE, c = CORAL, g = GOLD;
const BARS: unknown[] = [
  hbars([[[18, b]], [[16, b]], [[15, b]], [[14, b]]]),
  hbars([[[13, "#c7524d"]], [[16, "#e8706b"]], [[22, c]], [[24, "#ffb0ac"]]], 9, 11.500, 4, 4),
  hbars([[[20, "#437cff"]], [[16, "#437cff"]], [[24, "#437cff"]], [[18, "#2f62e0"]]]),
  hbars([[[13, b]], [[22, g]], [[13, b]], [[22, g]]]),
  hbars([[[13, b]], [[12, c], [10, g]], [[15, b]], [[22, g]]]),
  hbars([[[6, b], [6, c], [12, g]], [[6, b], [6, c], [10, g]], [[6, b], [6, c], [10, g]], [[6, b], [5, c], [8, g]]]),
  hbars([[[7, b], [6, c], [12, g]], [[7, b], [6, c], [11, g]], [[6, b], [6, c], [11, g]], [[6, b], [5, c], [9, g]]], 9, 11, 4.100, 4, 0),
  hbars([[[7, "#3547b5"], [7, b], [10, "#8890d8"]], [[7, "#3547b5"], [7, b], [9, "#8890d8"]], [[7, "#3547b5"], [6, b], [8, "#8890d8"]], [[7, "#3547b5"], [5, b], [7, "#8890d8"]]], 9, 11, 4.100, 4, 0),
  svg`${P("M8.500 15v11h28", "#444", 1.200)}${R(9, 18, 5, 5, b)}${R(14, 18, 3, 5, c)}${R(17, 18, 11, 5, g)}${R(12, 12, 16, 1, "#b9a0c0")}${R(4, 20, 4, 1, "#555")}`,
  svg`${P("M8.500 13v12h28", "#444", 1.200)}${R(9, 16, 10, 6, "#e0b64a")}${R(19, 16, 7, 6, g)}${R(26, 16, 10, 6, "#ffdf95")}${R(4, 19, 4, 1, "#555")}${R(12, 27, 16, 1, "#d9b860")}`,
  hbars([[[7, b], [6, c], [14, g]], [[7, b], [6, c], [14, g]], [[7, b], [6, c], [14, g]]], 9, 12, 3.700, 5.300),
  hbars([[[7, "#e46a66"], [6, "#ff8580"], [14, "#ffa19d"]], [[7, "#e46a66"], [6, "#ff8580"], [14, "#ffa19d"]], [[7, "#e46a66"], [6, "#ff8580"], [14, "#ffa19d"]]], 9, 11, 5.400, 5.300),
  svg`${P("M8.500 14v10h28", "#444", 1.200)}${R(9, 15, 7, 8, b)}${R(16, 15, 6, 8, c)}${R(22, 15, 13, 8, g)}${R(4, 18, 4, 1, "#555")}${R(12, 26, 16, 1, "#c77")}`,
];
const thumb = (s: unknown, dot = false) => html`<button class="cell"><svg width="40" height="40" viewBox="0 0 40 40">${s}${dot ? svg`<path d="M3 .5 5.500 3 3 5.500.5 3z" fill="#ffe34d" stroke="#666" stroke-width=".9"/>` : ""}</svg></button>`;

@customElement("app-left")
class AppLeft extends LitElement {
  static styles = [base, css`
    :host { display: flex; background: #fff; }
    nav { width: 56px; border-right: 1px solid #e8e8ec; border-left: 1px solid #d8d9de; display: flex; flex-direction: column; align-items: center; padding-top: 12px; }
    .col { height: 16px; margin-bottom: 12px; color: #444; }
    .n { flex-direction: column; justify-content: flex-start; height: 60px; width: 54px; font-size: 9px; line-height: 13px; color: #222; }
    .n span { display: flex; align-items: center; justify-content: center; width: 32px; height: 32px; border-radius: 4px; color: #444; }
    .on { color: #007dff; } .on span { background: #e5f2ff; color: #007dff; }
    .panel { position: relative; width: 217px; border-right: 1px solid #e2e2e8; display: flex; flex-direction: column; }
    .head { display: flex; justify-content: space-between; padding: 17px 16px 16px; font-weight: 700; }
    .head a { display: flex; gap: 4px; color: #007dff; font-weight: 400; align-items: center; }
    .search { display: flex; align-items: center; gap: 7px; height: 31px; margin: 0 16px; border: 1px solid #e0e0e4; border-radius: 5px; padding-left: 9px; color: #999; font-size: 13px; }
    .search input { width: 140px; } .search input::placeholder { color: #aaa; opacity: 1; }
    .tools { display: flex; justify-content: space-between; padding: 17px 16px 11px; border-bottom: 1px solid #e8e8ec; }
    .tools button { gap: 4px; }
    .scroll { flex: 1; overflow: hidden; display: flex; flex-direction: column; }
    .grid { display: grid; grid-template-columns: repeat(4, 40px); gap: 8px; padding: 0 16px; flex: none; }
    .first { margin-top: -13px; }
    .cell { width: 40px; height: 40px; background: #f6f7fc; border-radius: 4px; }
    h4 { margin: 0; font: inherit; display: flex; align-items: center; gap: 5px; height: 44px; padding: 4px 16px 0; font-size: 12px; }
    .foot { border-top: 1px solid #e8e8ec; padding: 11px 16px 12px; }
    .foot button { width: 100%; height: 32px; background: #007dff; color: #fff; border-radius: 5px; }
    .bar { position: absolute; right: 2px; top: 424px; height: 300px; width: 4px; border-radius: 2px; background: #dedee4; }
  `];
  render() {
    const nav: Array<[string, string]> = [["vorlagen", "Vorlagen"], ["shapes", "Symbole"], ["tbox", "Text"], ["image", "Bilder"], ["ikone", "Ikone"], ["sticker", "Aufkleber"], ["chart", "Diagram..."], ["widget", "Widgets"]];
    return html`
      <nav><button class="col" aria-label="Einklappen">${ic("dblLeft", 16)}</button>
        ${nav.map(([i, l], n) => html`<button class="n ${n === 1 ? "on" : ""}"><span>${ic(i, 19)}</span>${l}</button>`)}</nav>
      <section class="panel">
        <div class="head">Symbole<a href="#ai">${ic("aistar", 15)}AI Symbol</a></div>
        <label class="search">${ic("glass", 14)}<input placeholder="Symbole durchsuchen" aria-label="Symbole durchsuchen" /></label>
        <div class="tools"><button>${ic("upup", 8)}Alle zuklappen</button><button>${ic("gear", 15)}Verwalten</button></div>
        <div class="scroll">
          <div class="grid first">${THUMBS.map((t) => thumb(t.s, t.d))}</div>
          <h4>${caret} Bar</h4>
          <div class="grid">${BARS.map((s) => thumb(s))}</div>
        </div>
        <div class="foot"><button>Weitere Symbole</button></div>
        <i class="bar"></i>
      </section>`;
  }
}

/* ---------- drawing canvas ---------- */
const UNIT = 32.126;
const PALETTE = ("b01020 c8102e ea4560 f76a88 fa9db0 258095 35a8c4 3fc2dd 5cd8ee a4eefd f45426 ff8038 ff9518 ffb612 ffc45c " +
  "12957c 15b296 1ccbac 68d8c4 85ecd9 9c2f60 cb4f8c e566a8 fa88c8 f2c2dc 628c12 7aa52a 9cc024 b4d04c d2e08c 1c24ac 3440da 6c40f0 9068fa ac90fa " +
  "ffcb04 ffdc28 f4e828 fbf448 fcfc80 9c50dc c850e8 d46cf8 c084fc dca0fc 287c44 40a058 50ac74 64bc88 90d8ac e8362c fc4838 ff6460 ff7c78 ff948c " +
  "2044a8 2c58d0 346cf4 6490fc 84acf4 7a2c00 963800 b04020 d05c3c e0705c 1484d8 289cf4 40b0fc 3cd0ff 68e4ff 7a4c34 985c40 b87050 d88860 f89c70 " +
  "908478 b4ac98 ccc8b4 e4dcc8 f2ecd8 181818 303030 484848 606060 808080 bcbcbc cacaca d8d8d8 e4e4e4 f0f0f0").split(" ");

const ROWS = [
  { y: 366, v: [60, 45, 95], p: [30, 23, 47], l: "2020" },
  { y: 433, v: [50, 50, 100], p: [25, 25, 50], l: "2018" },
  { y: 500, v: [75, 30, 95], p: [38, 15, 47], l: "2015" },
];
const COLORS = [BLUE, CORAL, GOLD];
const DONUTS = [
  { x: 439, v: [45, 35, 25], card: 337, sum: "7,899", sx: 443, pos: [[494, 671], [407, 731], [400, 641]] },
  { x: 700, v: [55, 40, 25], card: 589, sum: "35,988", sx: 701, pos: [[756, 675], [660, 724], [665, 638]] },
  { x: 964, v: [65, 56, 75], card: 859, sum: "50,888", sx: 963, pos: [[1013, 654], [973, 739], [910, 662]] },
];
const NOTES = [
  { x: 340, y: 766, j: true, lines: ["45 % der ausländischen Studierenden", "sind im Grundstudium mit einem", "Ingenieurabschluss eingeschrieben."] },
  { x: 593, y: 758, j: true, lines: ["60 % der ausländischen Studierenden", "sind im Grundstudium mit einem", "ingenieurwissenschaftlichen oder", "technikbezogenen Abschluss", "eingeschrieben."] },
  { x: 869, y: 760, j: false, lines: ["74 % der ausländischen Studenten", "sind in den Bereichen", "Ingenieurwesen, Betriebswirtschaft", "und Doktoranden eingeschrieben."] },
  { x: 343, y: 317, j: false, lines: ["Abbildung 4:Worldeducation service2015"] },
  { x: 322, y: 886, j: false, lines: ["Quelle: huff post india"] },
];

@customElement("app-canvas")
class AppCanvas extends LitElement {
  static styles = [base, css`
    :host { display: grid; grid-template: 17px 1fr 14px 17px / 18px 1fr 15px; background: #fff; min-width: 0; overflow: hidden; }
    .rh { grid-area: 1 / 2; overflow: hidden; border-bottom: 1px solid #e8e8ec; }
    .rv { grid-area: 2 / 1 / 3 / 2; overflow: hidden; border-right: 1px solid #e2e2e8; border-top: 1px solid #e2e2e8; }
    .rh svg, .rv svg { overflow: hidden; }
    .tick { font-size: 9px; fill: #777; }
    .stage { grid-area: 2 / 2; position: relative; overflow: hidden; background: #ebebf0; }
    .page { position: absolute; inset: 51px 0 7px 0; background: #fff; border-bottom: 1px solid #e2e2e8; }
    .art { position: absolute; left: 0; top: 0; font: 14px "Liberation Serif", serif; }
    .legend { font-size: 13px; }
    .note { position: absolute; font: 13px/17px "Liberation Serif", serif; color: #111; }
    .note.w { width: 198px; }
    .w p { text-align: justify; text-align-last: justify; } .w p:last-child { text-align-last: left; }
    p { margin: 0; }
    .vs { grid-area: 1 / 3 / 4 / 4; border-left: 1px solid #e8e8ec; padding: 94px 0 0 2px; }
    .vs i { display: block; width: 10px; height: 516px; border-radius: 5px; background: #cfcfd2; }
    .hs { grid-area: 3 / 1 / 4 / 3; padding: 2px 0 0 277px; }
    .hs i { display: block; width: 270px; height: 10px; border-radius: 5px; background: #cfcfd2; }
    .pal { grid-area: 4 / 1 / 5 / 4; display: flex; border-top: 1px solid #e8e8ec; padding-left: 12px; align-items: center; overflow: hidden; }
    .pal button { gap: 2px; width: 20px; margin-right: 3px; color: #444; }
    .float { position: absolute; left: 103px; top: 34px; width: 593px; height: 79px; background: #fff; border-radius: 7px; box-shadow: 0 3px 10px rgba(0, 0, 0, .12); display: flex; padding: 8px 0; font-size: 11px; line-height: 13px; }
    .f { flex-direction: column; justify-content: flex-start; color: #222; text-align: center; white-space: normal; }
    .f .k { display: flex; align-items: center; justify-content: center; height: 32px; gap: 2px; color: #444; margin-bottom: 5px; }
    .s { border-right: 1px solid #e8e8ec; }
    .bg { display: flex; align-items: center; justify-content: center; width: 30px; height: 32px; border-radius: 4px; background: #f0f0f2; }
    .w107 { width: 107px; } .w52 { width: 52px; } .w72 { width: 72px; } .w49 { width: 49px; } .w56 { width: 56px; } .w50 { width: 50px; } .w59 { width: 59px; } .w82 { width: 81px; }
    .tl { display: flex; flex-direction: column; justify-content: space-between; flex: 1; align-items: flex-end; padding-right: 4px; color: #999; }
    .pill { position: absolute; right: 16px; bottom: 17px; width: 89px; height: 40px; border-radius: 20px; background: #fff; box-shadow: 0 2px 8px rgba(0, 0, 0, .16); display: flex; align-items: center; }
    .pill button { flex: 1; height: 24px; } .pill button + button { border-left: 1px solid #e2e2e8; }
    .mark { position: absolute; left: 98px; top: 31px; width: 601px; height: 84px; border: 2px solid #ec1c24; }
  `];
  ruler(vertical: boolean) {
    const start = vertical ? -1 : 2;
    const zero = vertical ? 235.300 - 186 : 320.300 - 291 - 3 * UNIT;
    return Array.from({ length: vertical ? 23 : 26 }, (_, i) => {
      const n = start + i, p = Math.round(zero + n * UNIT) + 0.5, h = Math.round(p + UNIT / 2) - 0.5;
      return vertical
        ? svg`<path d="M0 ${p}H17M10 ${h}H17" stroke="#dcdce2"/><text class="tick" transform="translate(9 ${p + 2}) rotate(-90)" text-anchor="end">${n < 0 ? `- ${-n * 10}` : n * 10}</text>`
        : svg`<path d="M${p} 0V17M${h} 10V17" stroke="#dcdce2"/><text class="tick" x=${p + 1.500} y="10">${n * 10}</text>`;
    });
  }
  chart() {
    const handle = (x: number, y: number) => svg`<rect x=${x - 4} y=${y - 4} width="8" height="8" rx="1" fill="#fff" stroke="#007dff"/>`;
    return svg`
      ${ROWS.map((r) => {
        let x = 326;
        return svg`<text x="312" y=${r.y + 24} text-anchor="end">${r.l}</text>${r.v.map((v, i) => {
          const w = (v / 200) * 618, x0 = x; x += w;
          return svg`<rect x=${x0} y=${r.y} width=${w} height="38" fill=${COLORS[i]} /><text x=${x0 + w / 2} y=${r.y + 24} text-anchor="middle" fill="#fff">${r.p[i]}%</text>`;
        })}`;
      })}
      <path d="M325.500 352V552.500H944M321 352.500h4M321 418.500h4M321 485.500h4M321 552.500h4M325.500 552v5M449.500 552v5M573.500 552v5M696.500 552v5M820.500 552v5M943.500 552v5" stroke="#222" fill="none"/>
      ${[0, 20, 40, 60, 80, 100].map((n) => svg`<text x=${326 + n * 6.180} y="573" text-anchor="middle">${n}%</text>`)}
      ${["Arabische Staaten", "Europa", "Ostasien-Pazifik"].map((l, i) => svg`<circle cx="979.500" cy=${443 + i * 25.500} r="6.500" fill=${COLORS[i]} /><text class="legend" x="994" y=${448 + i * 25.500}>${l}</text>`)}
      <path d="M291 340.500H1098.500V580.500H291" stroke="#007dff" fill="none" stroke-dasharray="5 3"/>
      ${[[692.5, 340.5], [1098.5, 340.5], [1098.5, 460.5], [692.5, 580.5], [1098.5, 580.5]].map(([x, y]) => handle(x, y))}
      ${DONUTS.map((d) => {
        const tot = d.v.reduce((a, q) => a + q, 0);
        let a = 0;
        return svg`<rect x=${d.card + 0.5} y="605" width="204" height="264.500" fill="#fff" stroke="#aaa"/>
          ${d.v.map((v, i) => { const a0 = a; a += v / tot; return svg`<path d=${arc(d.x + 0.3, 683.3, 72, 42.5, a0, a)} fill=${COLORS[i]} /><text x=${d.pos[i][0]} y=${d.pos[i][1] + 4} fill="#fff" text-anchor="middle">${v}</text>`; })}
          <text x=${d.sx} y="700" text-anchor="middle">${d.sum}</text>`;
      })}`;
  }
  render() {
    const f = (icon: string, l: string, cls: string) => html`<button class="f ${cls}"><span class="k">${ic(icon, 20)}</span>${l}</button>`;
    return html`
      <div class="rh"><svg width="816" height="17">${this.ruler(false)}</svg></div>
      <div class="rv"><svg width="17" height="731">${this.ruler(true)}</svg></div>
      <div class="stage">
        <div class="page"></div>
        <svg class="art" width="816" height="732" viewBox="291 185 816 732" fill="#111">${this.chart()}</svg>
        ${NOTES.map((n) => html`<div class="note ${n.j ? "w" : ""}" style="left:${n.x - 291}px;top:${n.y - 185}px">${n.lines.map((l) => html`<p>${l}</p>`)}</div>`)}
        <div class="float">
          ${f("aifill", "Diagrammanalyse", "s w107")}${f("bars", "Type", "s w52")}
          <button class="f s w72"><span class="k"><span class="bg">${ic("edit", 20)}</span>${caret}</span>Daten bearbeiten</button>
          ${f("style", "Stile", "s w49")}${f("legend", "Legende", "w59")}${f("tag", "Daten-Tag", "w56")}${f("xaxis", "X-Achse", "w52")}${f("yaxis", "Y-Achse", "s w50")}${f("code", "Datenformat", "w82")}
          <div class="tl">${ic("pin", 11)}${ic("shrink", 10)}</div>
        </div>
        <div class="pill"><button aria-label="Zauberstab">${ic("wand", 20)}</button><button aria-label="AI">${ic("aifill", 20)}</button></div>
        <div class="mark"></div>
      </div>
      <div class="vs"><i></i></div>
      <div class="hs"><i></i></div>
      <div class="pal"><button aria-label="Füllfarbe">${ic("bucket", 13)}${caret}</button>
        <svg width="812" height="14">${PALETTE.map((p, i) => svg`<rect x=${i * 9} width="7" height="14" rx="2" fill=${"#" + p} />`)}</svg></div>`;
  }
}

/* ---------- data panel ---------- */
@customElement("app-data")
class AppData extends LitElement {
  static styles = [base, css`
    :host { display: flex; background: #fff; border-right: 1px solid #d8d9de; }
    nav { width: 37px; border: solid #e8e8ec; border-width: 0 1px; display: flex; flex-direction: column; align-items: center; gap: 10px; padding: 8px 0 0; color: #444; }
    nav button { width: 35px; height: 35px; }
    nav .col { height: 16px; margin-bottom: -2px; }
    nav .on { background: #007dff; color: #fff; }
    nav .last { margin-top: auto; height: 32px; }
    .panel { flex: 1; display: flex; flex-direction: column; color: #111; min-width: 0; font-size: 12px; }
    h3 { margin: 0; font: inherit; padding: 9px 20px 7px; height: 33px; border-bottom: 1px solid #e8e8ec; }
    .acts { display: flex; gap: 16px; padding: 11px 20px 19px; }
    .acts button { height: 28px; width: 78px; border: 1px solid #e0e0e4; border-radius: 5px; }
    .sheet { position: relative; flex: 1; margin: 0 19px 0 20px; border: solid #e4e4ea; border-width: 1px 1px 0 1px; overflow: hidden; }
    .view { position: absolute; inset: 0 6px 7px 0; overflow: hidden; }
    table { table-layout: fixed; width: 450px; border-collapse: separate; border-spacing: 0; }
    col.n { width: 50px; }
    th { font-weight: 400; text-align: left; background: #f4f4fa; height: 23px; padding: 0 0 0 6px; border: solid #d8d8dc; border-width: 0 1px 1px 0; }
    thead th { padding-left: 12px; }
    td { padding: 0; border: solid #e6e6ea; border-width: 0 1px 1px 0; vertical-align: top; }
    td div { height: 22px; overflow: hidden; padding: 0 3px; line-height: 15px; font-size: 11px; white-space: normal; }
    .h { display: flex; align-items: center; } .h span { width: 40px; } .h i { width: 15px; height: 10px; }
    .c0 { background: #4155c5; } .c1 { background: #ff7d78; } .c2 { background: #ffcb52; }
    .v { position: absolute; right: 0; top: 1px; width: 6px; height: 475px; border-radius: 3px; background: #e0e0e6; }
    .hb { position: absolute; left: 0; bottom: 1px; height: 6px; width: 88px; border-radius: 3px; background: #e0e0e6; }
  `];
  render() {
    const data = [["", "Arabische Staaten", "Europa", "Ostasien-Pazifik"], ["2015", "75", "30", "95"], ["2018", "50", "50", "100"], ["2020", "60", "45", "95"]];
    return html`
      <nav><button class="col" aria-label="Ausklappen">${ic("dblRight", 16)}</button>
        <button aria-label="Füllen">${ic("bucket", 19)}</button><button aria-label="Seite">${ic("doc", 19)}</button>
        <button class="on" aria-label="Diagramm">${ic("legend", 20)}</button><button aria-label="Hilfe">${ic("help", 20)}</button>
        <button class="last" aria-label="Einstellungen">${ic("gear", 20)}</button></nav>
      <section class="panel">
        <h3>Daten bearbeiten</h3>
        <div class="acts"><button>Importieren</button><button>Exportieren</button></div>
        <div class="sheet"><div class="view"><table>
          <colgroup><col class="n" /><col span="5" /></colgroup>
          <thead><tr><th></th><th>A</th>${["B", "C", "D"].map((l, i) => html`<th><div class="h"><span>${l}</span><i class="c${i}"></i></div></th>`)}<th></th></tr></thead>
          <tbody>${Array.from({ length: 29 }, (_, r) => html`<tr><th>${r + 1}</th>${[0, 1, 2, 3, 4].map((q) => html`<td><div>${data[r]?.[q] ?? ""}</div></td>`)}</tr>`)}</tbody>
        </table></div><i class="v"></i><i class="hb"></i></div>
      </section>`;
  }
}

/* ---------- status bar ---------- */
@customElement("app-status")
class AppStatus extends LitElement {
  static styles = [base, css`
    :host { display: flex; align-items: center; height: 30px; flex: none; background: #f2f3f9; color: #222; padding: 2px 19px 0 18px; font-size: 12px; }
    .sep { width: 1px; height: 22px; background: #dcdde3; flex: none; }
    .page { display: flex; align-items: center; width: 128px; padding: 0 12px 0 16px; }
    .page select { flex: 1; }
    .w30 { width: 30px; justify-content: flex-start; } .w40 { width: 40px; }
    .tab { width: 72px; text-align: center; color: #007dff; font-weight: 700; }
    .sp { flex: 1; }
    .t { text-align: center; font-size: 11px; flex: none; } .n { width: 130px; } .id { width: 81px; }
    .l { gap: 3px; width: 48px; padding-left: 11px; justify-content: flex-start; } .f { gap: 8px; width: 57px; margin-left: 6px; justify-content: flex-start; } .p { width: 40px; }
    .m { width: 32px; }
    input { appearance: none; width: 96px; height: 16px; flex: none; }
    input::-webkit-slider-runnable-track { height: 3px; border-radius: 2px; background: linear-gradient(90deg, #444 20%, #fff 20%); }
    input::-webkit-slider-thumb { appearance: none; width: 12px; height: 12px; margin-top: -5px; border-radius: 50%; background: #fff; border: 2px solid #333; }
    .z { width: 62px; display: flex; align-items: center; gap: 3px; padding-left: 11px; flex: none; }
    .z select { width: 30px; }
    .e { width: 41px; } .x { width: 20px; }
  `];
  render() {
    return html`
      <button class="w30" aria-label="Seiten">${ic("pages", 18)}</button><i class="sep"></i>
      <label class="page"><select aria-label="Seite"><option>Seite-1</option></select>${caret}</label><i class="sep"></i>
      <button class="w40" aria-label="Neue Seite">${ic("plus", 12)}</button><i class="sep"></i>
      <a class="tab" href="#p1">Seite-1</a><i class="sep"></i><span class="sp"></span><i class="sep"></i>
      <span class="t n">Anzahl an Formen: 16</span><i class="sep"></i><span class="t id">Form-ID:104</span><i class="sep"></i>
      <button class="l" aria-label="Ebenen">${ic("layers", 18)}${caret}</button>
      <button class="f">${ic("focus", 15)}Fokus</button><button class="p" aria-label="Präsentieren">${ic("play", 16)}</button><i class="sep"></i>
      <button class="m" aria-label="Verkleinern">${ic("minus", 12)}</button><input type="range" min="0" max="100" value="18" aria-label="Zoom" /><button class="m" aria-label="Vergrößern">${ic("plus", 12)}</button>
      <label class="z"><select aria-label="Zoomstufe"><option>85%</option></select>${caret}</label><i class="sep"></i>
      <button class="e" aria-label="Einpassen">${ic("fit", 15)}</button><button class="x" aria-label="Breite">${ic("width", 15)}</button>`;
  }
}

@customElement("app-root")
class AppRoot extends LitElement {
  static styles = css`
    :host { display: flex; flex-direction: column; height: 100vh; overflow: hidden; }
    main { position: relative; flex: 1; display: grid; grid-template-columns: 273px 1fr 436px; min-height: 0; }
    app-left, app-canvas, app-data { min-height: 0; }
    .mark { box-sizing: border-box; position: absolute; border: 2px solid #ec1c24; pointer-events: none; }
    .a { left: 59px; top: 94px; width: 206px; height: 640px; }
    .b { right: 13px; top: 83px; width: 373px; height: 137px; }
  `;
  render() {
    return html`<app-header></app-header><app-ribbon></app-ribbon>
      <main><app-left></app-left><app-canvas></app-canvas><app-data></app-data><div class="mark a"></div><div class="mark b"></div></main>
      <app-status></app-status>`;
  }
}
